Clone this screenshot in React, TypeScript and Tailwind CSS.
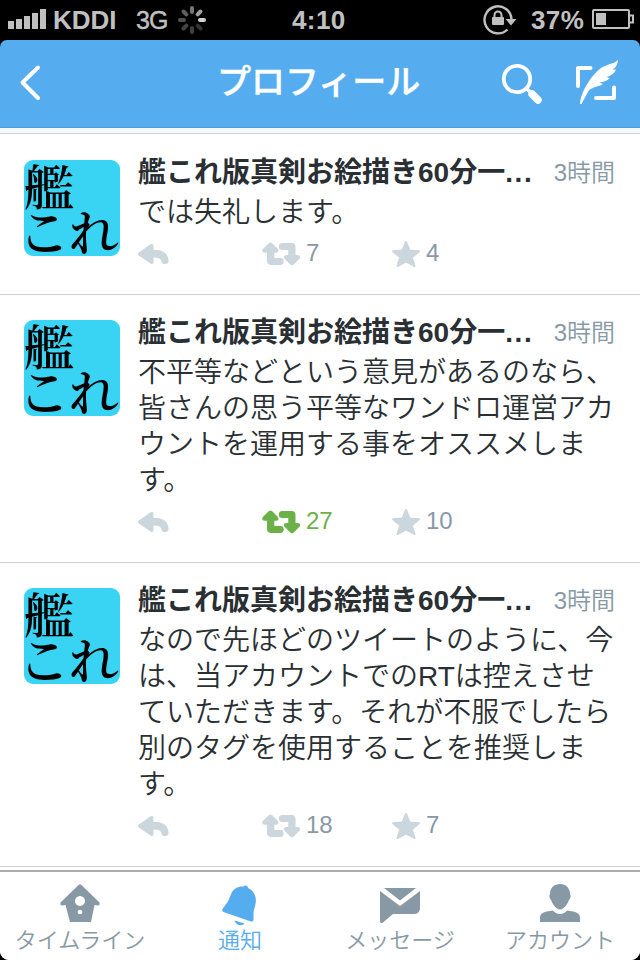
import React from 'react';

const JP = "font-['Liberation_Sans','Noto_Sans_CJK_JP',sans-serif]";

function StatusBar() {
  return (
    <div className="flex h-10 shrink-0 items-center bg-black text-[26px] font-bold leading-10 text-[#c0c0c0]">
      <svg className="ml-2 shrink-0" width="38" height="40" fill="#c0c0c0">
        <rect x="0" y="21" width="6" height="8" />
        <rect x="8" y="19" width="6" height="10" />
        <rect x="16" y="16" width="6" height="13" />
        <rect x="24" y="13" width="6" height="16" />
        <rect x="32" y="9" width="6" height="20" />
      </svg>
      <span className="ml-[7px] w-[83px] shrink-0">KDDI</span>
      <span className="w-[42px] shrink-0 text-[25px] font-normal tracking-[-1px] [-webkit-text-stroke:0.4px_#c0c0c0]">3G</span>
      <svg className="-ml-px shrink-0" width="30" height="40" viewBox="-15 -20 30 40" strokeWidth="4" strokeLinecap="round">
        <path d="M0-8v-4" stroke="#777" />
        <path d="M5.7-5.7l2.8-2.8" stroke="#a0a0a0" />
        <path d="M8 0h4" stroke="#d0d0d0" />
        <path d="M5.7 5.7l2.8 2.8" stroke="#333" />
        <path d="M0 8v4" stroke="#404040" />
        <path d="M-5.7 5.7l-2.8 2.8" stroke="#444" />
        <path d="M-8 0h-4" stroke="#505050" />
        <path d="M-5.7-5.7l-2.8-2.8" stroke="#606060" />
      </svg>
      <span className="ml-[85px] w-[190px] shrink-0 tracking-[0.4px]">4:10</span>
      <svg className="shrink-0" width="36" height="40" viewBox="482 0 36 40">
        <path d="M507.5 29.5A13.5 13.5 0 1 1 511.5 19" fill="none" stroke="#c0c0c0" strokeWidth="2.4" />
        <path d="M505.5 19h11l-5.5 6.500z" fill="#c0c0c0" />
        <rect x="492" y="17" width="12" height="8" rx="1" fill="#c0c0c0" />
        <path d="M494.500 18v-3a3.500 3.500 0 0 1 7 0v3" fill="none" stroke="#c0c0c0" strokeWidth="2" />
      </svg>
      <span className="ml-[13px] w-[61px] shrink-0 tracking-[0.4px]">37%</span>
      <svg className="shrink-0" width="43" height="40" fill="none">
        <rect x="1" y="10" width="36" height="18" rx="1" stroke="#c0c0c0" strokeWidth="2" />
        <path d="M37.500 15.500h3.500v7h-3.500" stroke="#c0c0c0" strokeWidth="2" />
        <rect x="4" y="13" width="10" height="12" fill="#c0c0c0" />
      </svg>
    </div>
  );
}

function NavBar() {
  return (
    <div className="bg-black">
      <header className="flex h-[88px] items-center rounded-t-[7px] border-b border-[#4f9bdb] bg-[#55acee] text-white">
        <svg className="ml-[18px] shrink-0" width="26" height="88" fill="none">
          <path d="M20 27.500L4.500 42.500L20 58" stroke="#fff" strokeWidth="4" strokeLinecap="round" strokeLinejoin="round" />
        </svg>
        <h1 className="ml-[173px] w-[284px] shrink-0 whitespace-nowrap pb-[3px] text-[34px] font-medium leading-[48px] [-webkit-text-stroke:0.4px_white]">プロフィール</h1>
        <svg className="shrink-0" width="42" height="88" viewBox="501 40 42 88" fill="none" stroke="#fff" strokeLinecap="round">
          <circle cx="517" cy="79" r="13.200" strokeWidth="3.800" />
          <path d="M526.500 88.500L530 92" strokeWidth="3.500" />
          <path d="M532 94L538 100" strokeWidth="7.500" />
        </svg>
        <svg className="ml-[30px] shrink-0" width="46" height="88" viewBox="573 40 46 88" fill="none" stroke="#fff">
          <path d="M590.500 68H578v18" strokeWidth="4" strokeLinecap="round" strokeLinejoin="round" />
          <path d="M596 98h18V87.500" strokeWidth="4" strokeLinecap="round" strokeLinejoin="round" />
          <path d="M580 104C580 98 583.500 90 587.500 83.500C591.500 77 596 71.500 601 68C607 64 614 64 618 60C618 64 615 68.500 612.500 70L616 69.500C614 74 610.500 76 606.500 77L610 78C607 81 603 82 599.500 82.500L603 84C599 87 592.500 86.500 588.500 91L581.500 104Z" fill="#fff" stroke="none" />
        </svg>
      </header>
    </div>
  );
}

function Avatar({ top }: { top: string }) {
  return (
    <div className={`${top} ml-6 h-24 w-24 shrink-0 rounded-[9px] bg-[#39d3f3]`}>
      <svg width="96" height="96" viewBox="0 0 96 96" className="overflow-visible font-['Noto_Serif_CJK_JP','Noto_Sans_CJK_JP',serif]" fontWeight="600">
        <text x="0" y="45" fontSize="48" textLength="50" lengthAdjust="spacingAndGlyphs">艦</text>
        <text x="-6" y="91" fontSize="50" textLength="52" lengthAdjust="spacingAndGlyphs">こ</text>
        <text x="45" y="91" fontSize="48" textLength="50" lengthAdjust="spacingAndGlyphs">れ</text>
      </svg>
    </div>
  );
}

function Reply() {
  return (
    <svg width="32" height="24" viewBox="138 242 32 24" fill="#ccd6dd" className="shrink-0">
      <path d="M138.800 252.500L150.500 244.300Q153.500 243 153.500 246V250H158C164.500 250.500 168.500 255.500 168.500 260.500V262Q168 264 165 264H163.500Q161.500 263.500 161.500 261C160.500 258.500 158.500 257.500 153.500 257.500V262Q153.500 265 150.500 263.500L138.800 255.500Q137 254 138.800 252.500Z" />
    </svg>
  );
}

function Retweet({ color }: { color: string }) {
  return (
    <svg width="40" height="24" viewBox="261 243 40 24" fill={color} className="shrink-0">
      <path d="M269 244Q270.500 243 272 244L278 250Q279.500 253 276.500 253.700H274.300V259H281Q283.700 259.500 283.700 262.300Q283.700 265.500 281 266H270.500Q267 265.500 267 262V253.700H264.500Q261 253 262.800 250Z" />
      <path d="M281.500 244H292.500Q295.500 244.500 295.500 248V256H298Q301.300 256.700 299.700 259.500L293.500 265.700Q292 267 290.500 265.700L284.300 259.500Q282.700 256.700 286 256H288.300V251H281.500Q278.800 250.500 278.800 247.500Q278.800 244.500 281.500 244Z" />
    </svg>
  );
}

function Star() {
  return (
    <svg width="30" height="28" viewBox="391 240 30 28" className="shrink-0">
      <path d="M406 242L409.500 250.500L419 251.300L411.800 257.300L414.500 266L406 261.300L397.500 266L400.200 257.300L393 251.300L402.500 250.500Z" fill="#ccd6dd" stroke="#ccd6dd" strokeWidth="2" strokeLinejoin="round" />
    </svg>
  );
}

interface TweetProps {
  height: string;
  top: string;
  lines: string[];
  retweets: number;
  stars: number;
  active?: boolean;
}

function Tweet({ height, top, lines, retweets, stars, active }: TweetProps) {
  return (
    <article className={`${height} flex shrink-0 border-b border-[#ccd0d4] bg-white`}>
      <Avatar top={top} />
      <div className={`${top} ml-[18px] flex w-[477px] shrink-0 flex-col`}>
        <div className="flex h-[33px] items-center justify-between whitespace-nowrap -mt-1">
          <span className="text-[28px] font-bold leading-[33px] text-[#292f33]">艦これ版真剣お絵描き60分一<span className="tracking-[1.6px]">...</span></span>
          <span className="text-[24px] font-[350] leading-[33px] text-[#8899a6]">3時間</span>
        </div>
        <div className="mt-[6px] whitespace-nowrap text-[28px] font-[350] leading-9 text-[#292f33]">
          {lines.map((line) => (
            <p key={line} className="h-9">{line}</p>
          ))}
        </div>
        <div className="mt-[9px] flex h-7 items-center text-[24px] leading-7 text-[#8899a6]">
          <div className="w-[123px]"><Reply /></div>
          <div className="flex w-[130px] items-center gap-[5px]">
            <Retweet color={active ? '#6cb048' : '#ccd6dd'} />
            <span className={active ? 'pb-[3px] text-[#6cb048]' : 'pb-[3px]'}>{retweets}</span>
          </div>
          <Star />
          <span className="ml-[5px] pb-[3px]">{stars}</span>
        </div>
      </div>
    </article>
  );
}

function Tab({ label, active, children }: { label: string; active?: boolean; children: React.ReactNode }) {
  return (
    <div className={`flex w-40 flex-col items-center ${active ? 'text-[#55acee]' : 'text-[#8899a6]'}`}>
      <svg width="44" height="44" viewBox="0 0 44 44" fill="currentColor" className="mt-2 shrink-0 overflow-visible">{children}</svg>
      <span className="mt-px whitespace-nowrap text-[22px] font-[350] leading-8">{label}</span>
    </div>
  );
}

function TabBar() {
  return (
    <nav className="flex h-[90px] shrink-0 border-t-2 border-[#adadad] bg-white">
      <Tab label="タイムライン">
        <path fillRule="evenodd" d="M20.500 5Q22 3.500 23.500 5L41.500 22.500Q42.500 24.500 40.500 25.500L36.500 25L33 42H12L7.500 25L3.500 25.500Q1.500 24.500 2.500 22.500ZM22 16a5 5 0 1 0 .01 0ZM22 29.700a2.300 2.300 0 1 0 .01 0Z" />
      </Tab>
      <Tab label="通知" active>
        <path d="M25.500 6.500C26.500 4.500 30 5.500 30 8C36 10.500 39 17 37.500 24L35.500 32V40Q35 42 33 41.500L5.500 32Q3.500 31 4.500 29L10 21.500L13.500 13C16 8.500 20 6 25.500 6.500Z" />
        <path d="M16.500 40.500L26.500 43.500C24 46.500 17.500 45.500 16.500 40.500Z" />
      </Tab>
      <Tab label="メッセージ">
        <path d="M6 8H38L22 20.500Z" />
        <path d="M2 11L22 26L42 11V29Q41 33.500 37 34H15L5 42.500Q2 44 2 41Z" />
      </Tab>
      <Tab label="アカウント">
        <path d="M22 4C28 4 32 8 32 14C33 15 33 18 31 20C29.500 24 26 29.500 22 29.500C18 29.500 14.500 24 13 20C11 18 11 15 12 14C12 8 16 4 22 4Z" />
        <path d="M2 42V38C2 34 5 32 9 31.500L15 30.500C18 35 26 35 29 30.500L35 31.500C39 32 42 34 42 38V42Z" />
      </Tab>
    </nav>
  );
}

export default function App() {
  return (
    <div className={`${JP} h-[960px] w-[640px] overflow-hidden bg-black`}>
      <div className="flex h-[960px] flex-col overflow-hidden rounded-b-[9px] bg-white">
        <StatusBar />
        <NavBar />
        <div className="h-[6px] shrink-0 border-b border-[#c9d3da] bg-[#f5f8fa]" />
        <Tweet height="h-[161px]" top="mt-[26px]" lines={['では失礼します。']} retweets={7} stars={4} />
        <Tweet
          height="h-[268px]"
          top="mt-[25px]"
          lines={['不平等などという意見があるのなら、', '皆さんの思う平等なワンドロ運営アカ', 'ウントを運用する事をオススメしま', 'す。']}
          retweets={27}
          stars={10}
          active
        />
        <Tweet
          height="h-[304px]"
          top="mt-[25px]"
          lines={['なので先ほどのツイートのように、今', 'は、当アカウントでのRTは控えさせ', 'ていただきます。それが不服でしたら', '別のタグを使用することを推奨しま', 'す。']}
          retweets={18}
          stars={7}
        />
        <div className="h-[3px] shrink-0" />
        <TabBar />
      </div>
    </div>
  );
}
